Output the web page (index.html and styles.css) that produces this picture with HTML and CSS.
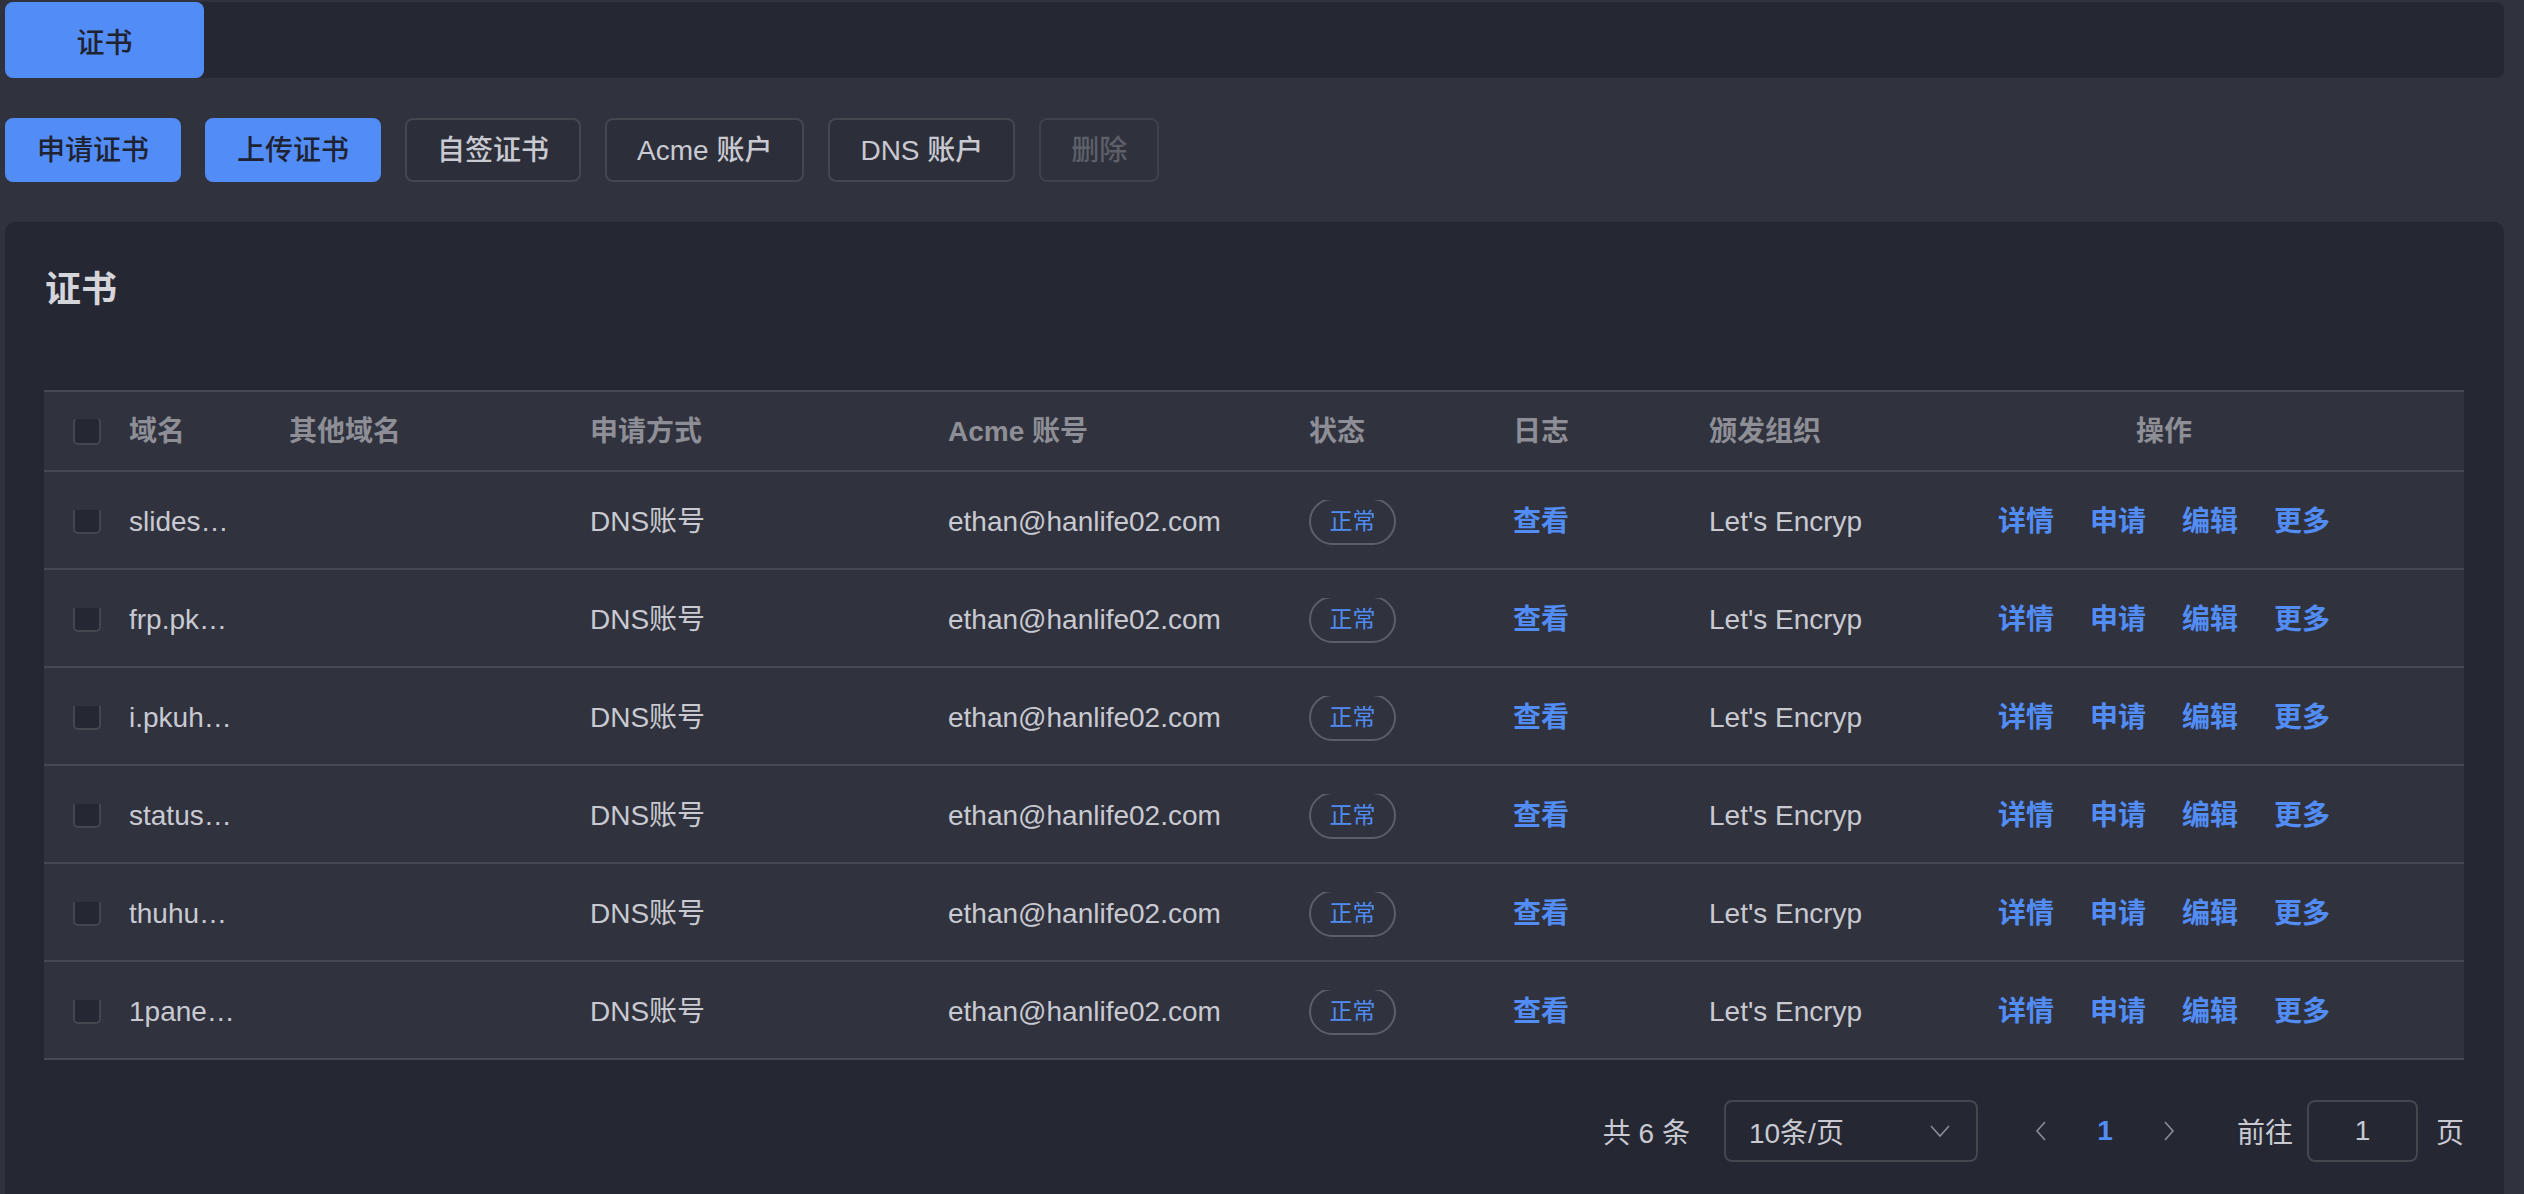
FILE: index.html
```html
<!DOCTYPE html>
<html lang="zh-CN">
<head>
<meta charset="utf-8">
<title>证书</title>
<link rel="stylesheet" href="styles.css">
</head>
<body>
<div class="page">
  <div class="topbar">
    <div class="tab">证书</div>
  </div>

  <div class="toolbar">
    <button class="btn primary">申请证书</button>
    <button class="btn primary">上传证书</button>
    <button class="btn">自签证书</button>
    <button class="btn">Acme 账户</button>
    <button class="btn">DNS 账户</button>
    <button class="btn disabled">删除</button>
  </div>

  <div class="card">
    <div class="card-title">证书</div>

    <div class="table">
      <div class="row head">
        <div class="cell c0"><span class="cb"></span></div>
        <div class="cell">域名</div>
        <div class="cell">其他域名</div>
        <div class="cell">申请方式</div>
        <div class="cell">Acme 账号</div>
        <div class="cell">状态</div>
        <div class="cell">日志</div>
        <div class="cell">颁发组织</div>
        <div class="cell center">操作</div>
      </div>

      <div class="row">
        <div class="cell c0"><span class="cb"></span></div>
        <div class="cell">slides…</div>
        <div class="cell"></div>
        <div class="cell">DNS账号</div>
        <div class="cell">ethan@hanlife02.com</div>
        <div class="cell"><span class="badge">正常</span></div>
        <div class="cell"><span class="link">查看</span></div>
        <div class="cell">Let's Encryp</div>
        <div class="cell center"><div class="ops"><span class="link">详情</span><span class="link">申请</span><span class="link">编辑</span><span class="link">更多</span></div></div>
      </div>

      <div class="row">
        <div class="cell c0"><span class="cb"></span></div>
        <div class="cell">frp.pk…</div>
        <div class="cell"></div>
        <div class="cell">DNS账号</div>
        <div class="cell">ethan@hanlife02.com</div>
        <div class="cell"><span class="badge">正常</span></div>
        <div class="cell"><span class="link">查看</span></div>
        <div class="cell">Let's Encryp</div>
        <div class="cell center"><div class="ops"><span class="link">详情</span><span class="link">申请</span><span class="link">编辑</span><span class="link">更多</span></div></div>
      </div>

      <div class="row">
        <div class="cell c0"><span class="cb"></span></div>
        <div class="cell">i.pkuh…</div>
        <div class="cell"></div>
        <div class="cell">DNS账号</div>
        <div class="cell">ethan@hanlife02.com</div>
        <div class="cell"><span class="badge">正常</span></div>
        <div class="cell"><span class="link">查看</span></div>
        <div class="cell">Let's Encryp</div>
        <div class="cell center"><div class="ops"><span class="link">详情</span><span class="link">申请</span><span class="link">编辑</span><span class="link">更多</span></div></div>
      </div>

      <div class="row">
        <div class="cell c0"><span class="cb"></span></div>
        <div class="cell">status…</div>
        <div class="cell"></div>
        <div class="cell">DNS账号</div>
        <div class="cell">ethan@hanlife02.com</div>
        <div class="cell"><span class="badge">正常</span></div>
        <div class="cell"><span class="link">查看</span></div>
        <div class="cell">Let's Encryp</div>
        <div class="cell center"><div class="ops"><span class="link">详情</span><span class="link">申请</span><span class="link">编辑</span><span class="link">更多</span></div></div>
      </div>

      <div class="row">
        <div class="cell c0"><span class="cb"></span></div>
        <div class="cell">thuhu…</div>
        <div class="cell"></div>
        <div class="cell">DNS账号</div>
        <div class="cell">ethan@hanlife02.com</div>
        <div class="cell"><span class="badge">正常</span></div>
        <div class="cell"><span class="link">查看</span></div>
        <div class="cell">Let's Encryp</div>
        <div class="cell center"><div class="ops"><span class="link">详情</span><span class="link">申请</span><span class="link">编辑</span><span class="link">更多</span></div></div>
      </div>

      <div class="row">
        <div class="cell c0"><span class="cb"></span></div>
        <div class="cell">1pane…</div>
        <div class="cell"></div>
        <div class="cell">DNS账号</div>
        <div class="cell">ethan@hanlife02.com</div>
        <div class="cell"><span class="badge">正常</span></div>
        <div class="cell"><span class="link">查看</span></div>
        <div class="cell">Let's Encryp</div>
        <div class="cell center"><div class="ops"><span class="link">详情</span><span class="link">申请</span><span class="link">编辑</span><span class="link">更多</span></div></div>
      </div>
    </div>

    <div class="pager">
      <span class="total">共 6 条</span>
      <div class="select">
        <span>10条/页</span>
        <svg class="chev" width="22" height="14" viewBox="0 0 22 14"><polyline points="2,2 11,12 20,2" fill="none" stroke="#8c8e96" stroke-width="1.6"/></svg>
      </div>
      <div class="pbtn prev"><svg width="12" height="22" viewBox="0 0 12 22"><polyline points="10,2 2,11 10,20" fill="none" stroke="#8c8e96" stroke-width="1.6"/></svg></div>
      <div class="pnum">1</div>
      <div class="pbtn"><svg width="12" height="22" viewBox="0 0 12 22"><polyline points="2,2 10,11 2,20" fill="none" stroke="#8c8e96" stroke-width="1.6"/></svg></div>
      <span class="goto">前往</span>
      <div class="pinput">1</div>
      <span class="unit">页</span>
    </div>
  </div>
</div>
</body>
</html>
```

FILE: styles.css
```css
* { box-sizing: border-box; }

html, body {
  margin: 0;
  padding: 0;
  background: #30323e;
  overflow: hidden;
}

body {
  font-family: "Liberation Sans", "Noto Sans CJK SC", sans-serif;
  font-size: 28px;
  color: #c9cad1;
}

.page {
  padding: 2px 20px 0 5px;
}

.topbar {
  height: 76px;
  background: #252733;
  border-radius: 8px;
  display: flex;
}

.tab {
  width: 199px;
  height: 76px;
  background: #528cf6;
  border-radius: 8px;
  color: #1f2230;
  font-size: 28px;
  font-weight: 500;
  display: flex;
  align-items: center;
  justify-content: center;
  padding-top: 2px;
}

.toolbar {
  margin-top: 40px;
  display: flex;
  gap: 24px;
}

.btn {
  height: 64px;
  padding: 2px 30px 0;
  border: 2px solid #45474f;
  border-radius: 8px;
  background: #2c2e39;
  color: #c9cad1;
  font-family: "Liberation Sans", "Noto Sans CJK SC", sans-serif;
  font-size: 28px;
  font-weight: 500;
  display: flex;
  align-items: center;
  line-height: 1;
}

.btn.primary {
  background: #528cf6;
  border-color: #528cf6;
  color: #1f2230;
}

.btn.disabled {
  color: #5d5f69;
  border-color: #3f414b;
  background: #2f313c;
}

.card {
  margin-top: 40px;
  background: #252733;
  border-radius: 10px;
  padding: 43px 40px 60px 39px;
}

.card-title {
  font-size: 36px;
  font-weight: 700;
  color: #d4d5db;
  line-height: 50px;
  padding-left: 1px;
}

.table {
  margin-top: 75px;
  background: #30323e;
  border-top: 2px solid #474952;
}

.row {
  display: grid;
  grid-template-columns: 85px 160px 301px 358px 361px 204px 196px 155px 600px;
  height: 98px;
  border-bottom: 2px solid #474952;
  align-items: center;
  line-height: 40px;
  padding-top: 4px;
}

.row.head {
  height: 80px;
  color: #8e8f96;
  font-weight: 700;
  padding-top: 2px;
}

.cell {
  white-space: nowrap;
  overflow: hidden;
  display: flex;
  align-items: center;
}

.cell.center {
  justify-content: center;
}

.c0 {
  padding-left: 29px;
}

.row .c0 .cb {
  margin-top: -4px;
}

.row.head .c0 .cb {
  margin-top: -2px;
}

.cb {
  width: 28px;
  height: 28px;
  border: 2px solid #45474f;
  border-radius: 5px;
  background: #252733;
}

.badge {
  display: inline-flex;
  align-items: center;
  justify-content: center;
  width: 87px;
  height: 47px;
  border: 2px solid #5d5f68;
  border-radius: 24px;
  color: #4f8cf3;
  font-size: 23px;
  line-height: 1;
  margin-top: -2px;
}

.link {
  color: #528df6;
  font-weight: 700;
}

.ops {
  display: flex;
  gap: 36px;
}

.pager {
  margin-top: 40px;
  display: flex;
  justify-content: flex-end;
  align-items: center;
  padding-right: 0;
  color: #c9cad1;
}

.total {
  margin-right: 34px;
}

.select {
  width: 254px;
  height: 62px;
  border: 2px solid #45474f;
  border-radius: 8px;
  display: flex;
  align-items: center;
  justify-content: space-between;
  padding: 0 25px 0 23px;
}

.chev {
  display: block;
}

.pbtn {
  width: 64px;
  height: 62px;
  display: flex;
  align-items: center;
  justify-content: center;
}

.pbtn.prev {
  margin-left: 31px;
}

.pnum {
  width: 64px;
  height: 62px;
  display: flex;
  align-items: center;
  justify-content: center;
  color: #528cf6;
  font-weight: 700;
}

.goto {
  margin-left: 36px;
  margin-right: 14px;
}

.pinput {
  width: 111px;
  height: 62px;
  border: 2px solid #45474f;
  border-radius: 8px;
  display: flex;
  align-items: center;
  justify-content: center;
}

.unit {
  margin-left: 18px;
}
```
